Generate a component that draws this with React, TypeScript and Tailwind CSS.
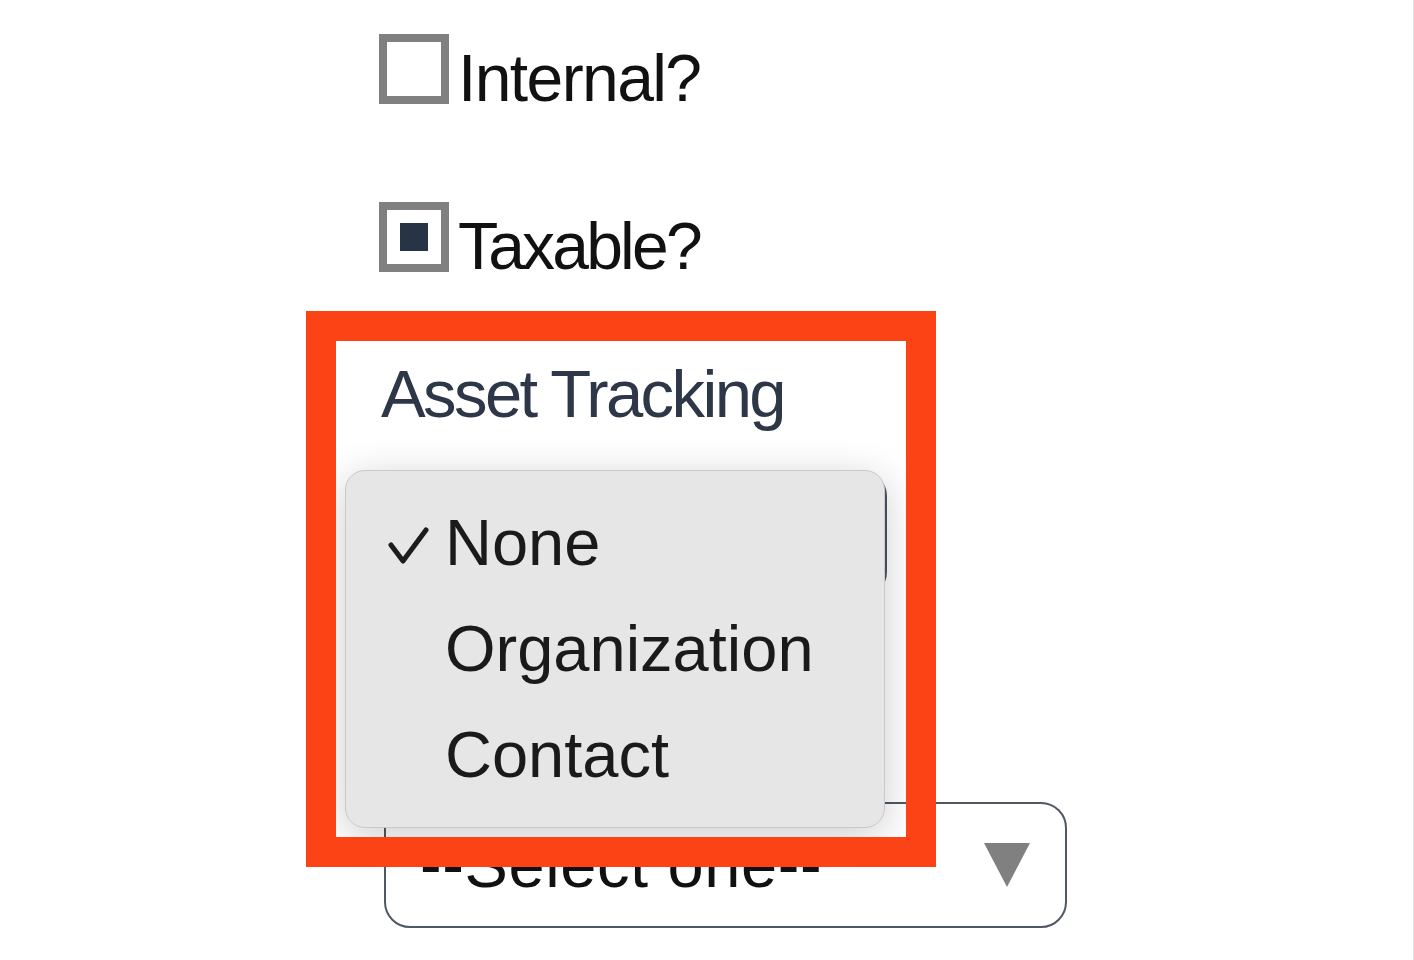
import React from "react";

const font = { fontFamily: '"Liberation Sans", Arial, sans-serif' };

function Checkbox({ checked }: { checked?: boolean }) {
  return (
    <div className="w-[70px] h-[70px] shrink-0 border-[8px] border-[#808080] bg-white flex items-center justify-center">
      {checked ? <div className="w-[28px] h-[28px] bg-[#263445]" /> : null}
    </div>
  );
}

function Check() {
  return (
    <svg width="44" height="40" viewBox="0 0 44 40" className="mt-[36px] ml-[40px] shrink-0">
      <path d="M5 19 L17 35 L40 4" fill="none" stroke="#1c1c1c" strokeWidth="5" strokeLinecap="round" strokeLinejoin="round" />
    </svg>
  );
}

export default function App() {
  const items = ["None", "Organization", "Contact"];
  return (
    <div
      className="relative w-[1414px] h-[960px] overflow-hidden bg-white border-r border-[#e2e2e2]"
      style={font}
    >
      <div className="flex flex-col pl-[379px] pt-[34px]">
        <label className="flex items-start gap-[9px]">
          <Checkbox />
          <span className="text-[66px] leading-[88px] tracking-[-1.6px] text-[#111111]">Internal?</span>
        </label>
        <label className="flex items-start gap-[9px] mt-[80px]">
          <Checkbox checked />
          <span className="text-[66px] leading-[88px] tracking-[-2.8px] text-[#111111]">Taxable?</span>
        </label>
        <div className="mt-[64px] ml-[2px] text-[67px] leading-[80px] tracking-[-2.6px] text-[#2d3748]">
          Asset Tracking
        </div>
        <div className="mt-[38px] ml-[5px] w-[503px] h-[124px] border-2 border-[#4a5568] rounded-[24px]" />
        <div className="mt-[206px] ml-[5px] w-[683px] h-[126px] border-2 border-[#4f5866] rounded-[26px] flex items-center justify-between pl-[34px] pr-[35px] bg-white">
          <span className="text-[65px] tracking-[0.6px] text-[#111111] whitespace-nowrap">--Select one--</span>
          <svg width="46" height="44" viewBox="0 0 46 44">
            <path d="M0 0 H46 L23 44 Z" fill="#808080" />
          </svg>
        </div>
      </div>

      {/* native select popup */}
      <div className="absolute left-[345px] top-[470px] w-[540px] h-[358px] rounded-[20px] bg-[#e6e6e6] border border-[#c9c9c9] shadow-[0_8px_40px_rgba(0,0,0,0.2)] pt-[19px] flex flex-col">
        {items.map((it, i) => (
          <div key={it} className="flex items-start h-[106px]">
            <div className="w-[99px] h-[106px] shrink-0 flex items-start">
              {i === 0 ? <Check /> : null}
            </div>
            <span className="text-[65px] leading-[106px] text-[#1a1a1a] whitespace-nowrap">{it}</span>
          </div>
        ))}
      </div>

      {/* highlight frame */}
      <div className="absolute left-[306px] top-[311px] w-[630px] h-[556px] border-[30px] border-[#fc4315] pointer-events-none" />
    </div>
  );
}
